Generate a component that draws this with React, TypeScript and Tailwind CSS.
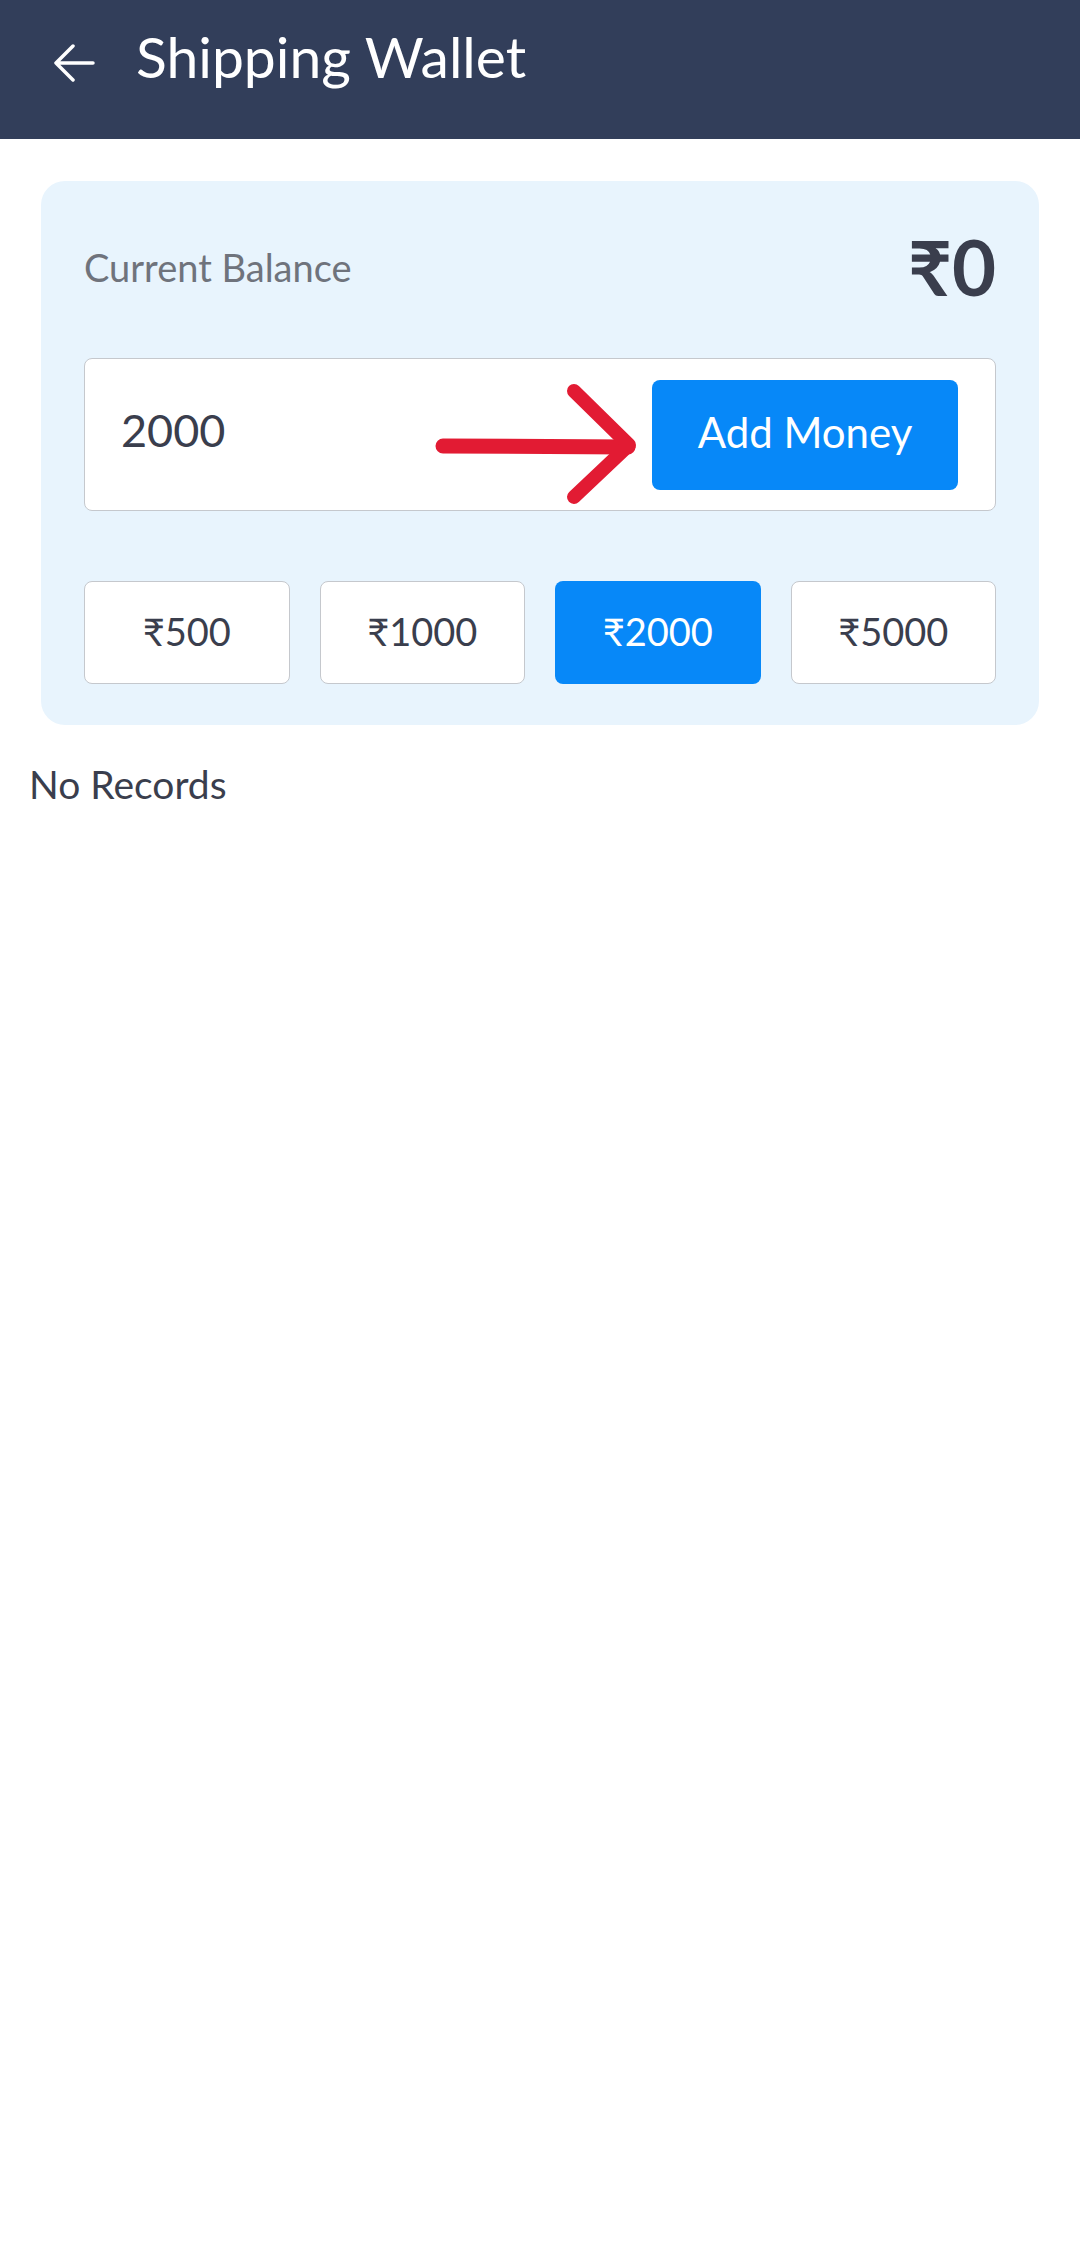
import React from "react";

const font = { fontFamily: "Lato, 'Noto Sans', 'DejaVu Sans', sans-serif" };

export default function App() {
  const amounts = ["₹500", "₹1000", "₹2000", "₹5000"];
  const selected = "₹2000";
  return (
    <div className="min-h-[2252px] w-[1080px] bg-white" style={font}>
      <div className="h-[139px] bg-[#323e5a]">
        <div className="flex h-[120px] items-center pl-[53px]">
          <svg className="mt-[6px]" width="42" height="38" viewBox="0 0 42 38" fill="none">
            <path d="M40 19H3 M20 2 L3 19 L20 36" stroke="white" strokeWidth="3.5" strokeLinecap="round" strokeLinejoin="round" />
          </svg>
          <div className="ml-[41px] pb-[8px] text-[57px] leading-none text-white">Shipping Wallet</div>
        </div>
      </div>

      <div className="px-[41px] pt-[42px]">
        <div className="rounded-[24px] bg-[#e8f4fd] px-[43px] pb-[41px] pt-[43px]">
          <div className="flex h-[86px] items-center justify-between">
            <div className="text-[38px] leading-none text-[#6f737c]">Current Balance</div>
            <div className="text-[76px] font-bold leading-none text-[#3a3e4d]">₹0</div>
          </div>

          <div className="relative mt-[48px] flex h-[153px] items-center justify-between rounded-[8px] border-[1.5px] border-[#c5c8cd] bg-white pl-[36px] pr-[37px]">
            <div className="pb-[8px] text-[45px] leading-none text-[#3a3e4d]">2000</div>
            <button className="flex h-[110px] w-[306px] items-center justify-center rounded-[8px] bg-[#0788f8] pb-[6px] text-[42px] leading-none text-white">
              Add Money
            </button>
            <svg className="absolute left-0 top-0" width="913" height="153" viewBox="0 0 913 153" fill="none">
              <path d="M358 87 L543 88" stroke="#e21b33" strokeWidth="15" strokeLinecap="round" />
              <path d="M489 32 L544 86 L489 138" stroke="#e21b33" strokeWidth="14" strokeLinecap="round" strokeLinejoin="round" />
            </svg>
          </div>

          <div className="mt-[70px] grid grid-cols-4 gap-[30px]">
            {amounts.map((a) =>
              a === selected ? (
                <div key={a} className="flex h-[103px] items-center justify-center rounded-[8px] bg-[#0788f8] pb-[4px] text-[38px] leading-none text-white">
                  {a}
                </div>
              ) : (
                <div key={a} className="flex h-[103px] items-center justify-center rounded-[8px] border-[1.5px] border-[#c5c8cd] bg-white pb-[4px] text-[38px] leading-none text-[#3a3e4d]">
                  {a}
                </div>
              )
            )}
          </div>
        </div>
      </div>

      <div className="mt-[40px] pl-[29px] text-[39px] leading-none text-[#3a3e4d]">No Records</div>
    </div>
  );
}
